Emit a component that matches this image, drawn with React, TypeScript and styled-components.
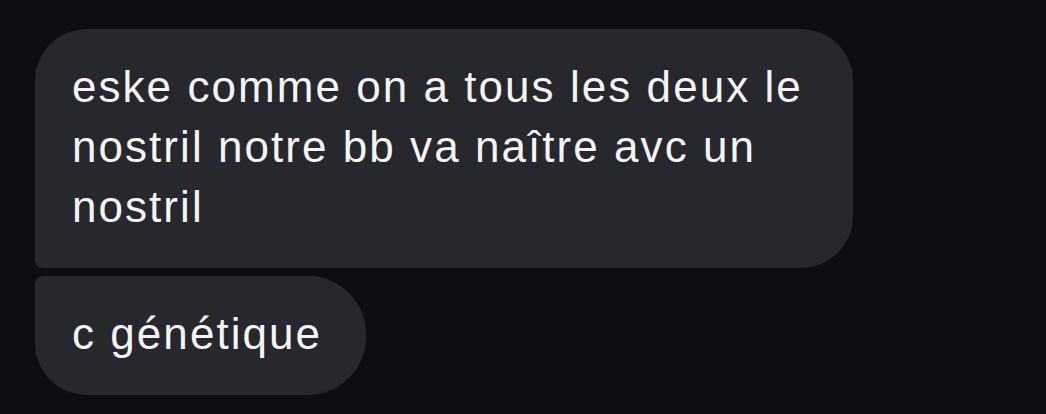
import React from "react";
import styled, { createGlobalStyle } from "styled-components";

const Global = createGlobalStyle`
  html, body { margin: 0; padding: 0; background: #0c0e12; }
  body { font-family: "Liberation Sans", Arial, sans-serif; }
`;

const Screen = styled.div`
  width: 1046px;
  height: 414px;
  background: #0c0e12;
  box-sizing: border-box;
  padding: 29px 0 0 35px;
  display: flex;
  flex-direction: column;
  align-items: flex-start;
  gap: 8px;
  overflow: hidden;
`;

const Bubble = styled.div<{ $pos: "first" | "last" }>`
  background: #26282d;
  color: #f4f4f5;
  font-size: 44px;
  letter-spacing: 2.05px;
  line-height: 60px;
  white-space: pre-line;
  box-sizing: border-box;
  width: fit-content;
  border-radius: ${(p) => (p.$pos === "first" ? "52px 52px 52px 8px" : "8px 58px 58px 52px")};
  padding: ${(p) => (p.$pos === "first" ? "28px 50px 31px 37px" : "28px 44px 31px 37px")};
`;

export default function App() {
  return (
    <>
      <Global />
      <Screen>
        <Bubble $pos="first">
          {"eske comme on a tous les deux le\nnostril notre bb va naître avc un\nnostril"}
        </Bubble>
        <Bubble $pos="last">c génétique</Bubble>
      </Screen>
    </>
  );
}
